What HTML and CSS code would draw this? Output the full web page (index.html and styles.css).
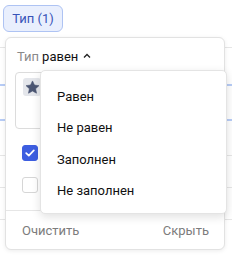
FILE: index.html
```html
<!DOCTYPE html>
<html lang="ru">
<head>
<meta charset="utf-8">
<link rel="stylesheet" href="styles.css">
</head>
<body>
<div class="page">
  <div class="toolbar">
    <button class="chip-btn">Тип (1)</button>
  </div>
  <div class="table">
    <div class="row r1 sel"></div>
    <div class="row r2 sel"></div>
    <div class="row r3"></div>
    <div class="row r4"></div>
    <div class="row r5"></div>
  </div>

  <div class="popover">
    <div class="pop-head">
      <span class="muted">Тип</span>
      <span class="op">равен</span>
      <svg class="caret" width="8" height="6" viewBox="0 0 8 6"><path d="M1 4.5 L4 1.5 L7 4.5" fill="none" stroke="#222" stroke-width="1.3"/></svg>
    </div>
    <div class="box">
      <span class="tag">
        <svg width="15" height="15" viewBox="0 0 24 24"><path d="M12 1.5l3.1 6.6 7.2.9-5.3 5 1.4 7.1L12 17.6l-6.4 3.5 1.4-7.1-5.3-5 7.2-.9z" fill="#4b5673" stroke="#4b5673" stroke-width="1" stroke-linejoin="round"/></svg>
      </span>
    </div>
    <div class="checks">
      <div class="check on">
        <svg width="10" height="8" viewBox="0 0 10 8"><path d="M1.2 4.2 L3.8 6.6 L8.8 1.4" fill="none" stroke="#fff" stroke-width="1.7" stroke-linecap="round" stroke-linejoin="round"/></svg>
      </div>
      <div class="check"></div>
    </div>
    <div class="pop-foot">
      <span>Очистить</span>
      <span>Скрыть</span>
    </div>
  </div>

  <div class="menu">
    <div class="item">Равен</div>
    <div class="item">Не равен</div>
    <div class="item">Заполнен</div>
    <div class="item">Не заполнен</div>
  </div>
</div>
</body>
</html>
```
FILE: styles.css
```css
* { box-sizing: border-box; }
html, body { margin: 0; padding: 0; background: #fff; }
body {
  font-family: Roboto, "Liberation Sans", sans-serif;
  font-size: 13px;
  color: #1b1b1b;
}
.page {
  position: relative;
  width: 232px;
  height: 262px;
  overflow: hidden;
}
.toolbar {
  padding: 5px 0 0 3px;
  height: 47px;
}
.chip-btn {
  font: inherit;
  font-size: 13px;
  color: #3853b8;
  background: #e9effd;
  border: 1.5px solid #aec3f3;
  border-radius: 6px;
  width: 60px;
  height: 27px;
  padding: 0;
  display: flex;
  align-items: center;
  justify-content: center;
}
.table {
  border-top: 1px solid #e6e6e6;
}
.row { border-bottom: 1px solid #e6e6e6; }
.row.sel { border-bottom: 2px solid #b7ccf6; }
.r1 { height: 38px; }
.r2 { height: 35px; }
.r3 { height: 35px; }
.r4 { height: 32px; }
.r5 { height: 32px; }

.popover {
  position: absolute;
  left: 5px;
  top: 37px;
  width: 220px;
  height: 213px;
  background: #fff;
  border: 1px solid #e2e2e2;
  border-radius: 6px;
  box-shadow: 0 1px 4px rgba(0,0,0,0.08);
  display: flex;
  flex-direction: column;
}
.pop-head {
  height: 34px;
  padding: 3px 0 0 11px;
  display: flex;
  align-items: center;
  gap: 4px;
  line-height: 16px;
}
.muted { color: #8a8a8a; }
.op { color: #111; margin-left: -1px; }
.caret { margin-left: 1px; margin-top: -2px; }
.box {
  margin: 0 9px 0 9px;
  height: 57px;
  border: 1px solid #dcdcdc;
  border-radius: 4px;
  padding: 5px 7px;
}
.tag {
  display: flex;
  align-items: center;
  justify-content: center;
  width: 18px;
  height: 18px;
  background: #e4e6eb;
  border-radius: 3px;
}
.checks {
  padding: 16px 0 0 16px;
  display: flex;
  flex-direction: column;
  gap: 16px;
  height: 81px;
}
.check {
  width: 16px;
  height: 16px;
  border: 1px solid #d6d6d6;
  border-radius: 3px;
  display: flex;
  align-items: center;
  justify-content: center;
}
.check.on {
  background: #3d5ee0;
  border-color: #3d5ee0;
}
.pop-foot {
  border-top: 1px solid #e6e6e6;
  flex: 1;
  display: flex;
  justify-content: space-between;
  align-items: center;
  padding: 0 15px 0 16px;
  color: #7c7c7c;
}
.menu {
  position: absolute;
  left: 40px;
  top: 70px;
  width: 187px;
  height: 144px;
  background: #fff;
  border: 1px solid #e4e4e4;
  border-radius: 5px;
  box-shadow: 0 3px 10px rgba(0,0,0,0.12);
  padding: 10px 0 0 0;
}
.item {
  height: 31.4px;
  line-height: 31px;
  padding-left: 16px;
  color: #111;
}
```
